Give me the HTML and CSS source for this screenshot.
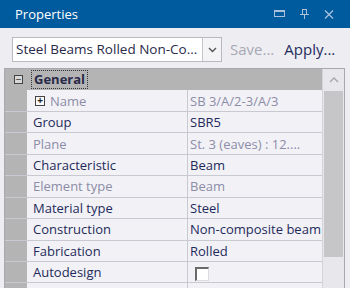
FILE: index.html
```html
<!DOCTYPE html>
<html lang="en">
<head>
  <meta charset="UTF-8">
  <title>Properties</title>
  <link rel="stylesheet" href="styles.css">
</head>
<body>
  <div class="titlebar">
    <div class="title">Properties</div>
    <div class="win-icons">
      <svg width="11" height="8" viewBox="0 0 11 8"><rect x="0.5" y="0.5" width="10" height="6" fill="none" stroke="#a9c2dc"/><line x1="0" y1="1.5" x2="11" y2="1.5" stroke="#a9c2dc"/></svg>
      <svg width="9" height="10" viewBox="0 0 9 10"><rect x="2.5" y="0.5" width="4" height="5" fill="none" stroke="#a9c2dc"/><line x1="0" y1="5.5" x2="9" y2="5.5" stroke="#a9c2dc"/><line x1="4.5" y1="6" x2="4.5" y2="10" stroke="#a9c2dc"/></svg>
      <svg width="10" height="9" viewBox="0 0 10 9"><path d="M1 0.5 L9 8.5 M9 0.5 L1 8.5" stroke="#a9c2dc" stroke-width="1.3"/></svg>
    </div>
  </div>

  <div class="toolbar">
    <div class="combo">
      <div class="combo-text">Steel Beams Rolled Non-Co...</div>
      <div class="combo-btn">
        <svg width="9" height="6" viewBox="0 0 9 6"><path d="M1 1 L4.5 4.5 L8 1" fill="none" stroke="#555" stroke-width="1.4"/></svg>
      </div>
    </div>
    <div class="tool-link disabled">Save...</div>
    <div class="tool-link">Apply...</div>
  </div>

  <div class="grid">
    <div class="rows">
      <div class="row category">
        <div class="gutter"><span class="box">&minus;</span></div>
        <div class="cat-label"><span class="focus">General</span></div>
      </div>
      <div class="row">
        <div class="gutter"></div>
        <div class="label muted"><span class="box small">+</span>Name</div>
        <div class="value muted">SB 3/A/2-3/A/3</div>
      </div>
      <div class="row">
        <div class="gutter"></div>
        <div class="label">Group</div>
        <div class="value">SBR5</div>
      </div>
      <div class="row">
        <div class="gutter"></div>
        <div class="label muted">Plane</div>
        <div class="value muted">St. 3 (eaves) : 12....</div>
      </div>
      <div class="row">
        <div class="gutter"></div>
        <div class="label">Characteristic</div>
        <div class="value">Beam</div>
      </div>
      <div class="row">
        <div class="gutter"></div>
        <div class="label muted">Element type</div>
        <div class="value muted">Beam</div>
      </div>
      <div class="row">
        <div class="gutter"></div>
        <div class="label">Material type</div>
        <div class="value">Steel</div>
      </div>
      <div class="row">
        <div class="gutter"></div>
        <div class="label">Construction</div>
        <div class="value">Non-composite beam</div>
      </div>
      <div class="row">
        <div class="gutter"></div>
        <div class="label">Fabrication</div>
        <div class="value">Rolled</div>
      </div>
      <div class="row">
        <div class="gutter"></div>
        <div class="label">Autodesign</div>
        <div class="value"><span class="checkbox"></span></div>
      </div>
      <div class="row">
        <div class="gutter"></div>
        <div class="label"></div>
        <div class="value"></div>
      </div>
    </div>
    <div class="scrollbar">
      <div class="arrow">
        <svg width="10" height="6" viewBox="0 0 10 6"><path d="M1 5 L5 1 L9 5" fill="none" stroke="#a6a6a6" stroke-width="1.3"/></svg>
      </div>
      <div class="thumb"></div>
    </div>
  </div>
</body>
</html>
```

FILE: styles.css
```css
body {
  margin: 0;
  background: #eeeef2;
  font-family: "Open Sans", "Noto Sans", sans-serif;
  font-size: 13px;
  color: #1f2a5c;
  overflow: hidden;
}
.titlebar {
  height: 28px;
  background: #005a9e;
  display: flex;
  align-items: center;
  justify-content: space-between;
  padding: 0 16px 0 15px;
}
.title {
  color: #fff;
  font-size: 13px;
}
.win-icons {
  display: flex;
  align-items: center;
  gap: 15px;
}
.toolbar {
  height: 40px;
  box-sizing: border-box;
  padding: 9px 0 0 12px;
  display: flex;
  align-items: flex-start;
}
.combo {
  width: 210px;
  height: 25px;
  box-sizing: border-box;
  border: 1px solid #b9b9c0;
  background: #fff;
  display: flex;
}
.combo-text {
  flex: 1;
  padding-left: 3px;
  line-height: 23px;
  font-size: 13.5px;
  color: #2a2a4a;
  white-space: nowrap;
  overflow: hidden;
}
.combo-btn {
  width: 18px;
  border-left: 1px solid #c4c4ca;
  background: #f4f4f6;
  display: flex;
  align-items: center;
  justify-content: center;
}
.tool-link {
  margin-left: 10px;
  line-height: 25px;
  font-size: 15px;
  color: #1f2a5c;
}
.tool-link.disabled {
  margin-left: 8px;
  color: #a8a8b4;
}
.grid {
  margin: 0 5px 0 4px;
  border: 1px solid #a8a8ae;
  border-bottom: none;
  display: flex;
  height: 219px;
  overflow: hidden;
}
.rows {
  flex: 1;
  background: #b4b4b4;
}
.row {
  height: 21.45px;
  box-sizing: border-box;
  display: flex;
  border-bottom: 1px solid #c9c9d1;
}
.gutter {
  width: 22px;
  background: #b4b4b4;
  display: flex;
  align-items: center;
  justify-content: flex-end;
  padding-right: 4px;
  box-sizing: border-box;
}
.label {
  width: 161px;
  box-sizing: border-box;
  background: #f2f2f6;
  border-right: 1px solid #c9c9d1;
  padding-left: 6px;
  display: flex;
  align-items: center;
  white-space: nowrap;
}
.value {
  flex: 1;
  background: #f2f2f6;
  padding-left: 2px;
  display: flex;
  align-items: center;
  white-space: nowrap;
  overflow: hidden;
}
.muted {
  color: #8c8ca8;
}
.category {
  border-bottom: none;
}
.cat-label {
  flex: 1;
  display: flex;
  align-items: center;
  padding-left: 4px;
}
.focus {
  font-weight: bold;
  border: 1px dotted #333;
  padding: 0 2px;
  line-height: 17px;
  color: #2a2a4a;
}
.box {
  width: 9px;
  height: 9px;
  border: 1px solid #444;
  box-sizing: border-box;
  display: flex;
  align-items: center;
  justify-content: center;
  font-size: 10px;
  line-height: 7px;
  color: #222;
  background: #d8d8d8;
}
.box.small {
  width: 10px;
  height: 10px;
  margin: 0 5px 0 2px;
  background: #fafafa;
  font-weight: bold;
}
.checkbox {
  margin-left: 5px;
  width: 14px;
  height: 14px;
  box-sizing: border-box;
  background: #fff;
  border-top: 2px solid #6a6a6a;
  border-left: 2px solid #6a6a6a;
  border-right: 1px solid #dcdcdc;
  border-bottom: 1px solid #dcdcdc;
  margin-top: 3px;
}
.scrollbar {
  width: 21px;
  background: #e8e8ec;
  border-left: 1px solid #d4d4d8;
  display: flex;
  flex-direction: column;
  align-items: center;
}
.arrow {
  height: 22px;
  display: flex;
  align-items: center;
  justify-content: center;
}
.thumb {
  width: 19px;
  height: 166px;
  background: #c6c6c8;
}
```
